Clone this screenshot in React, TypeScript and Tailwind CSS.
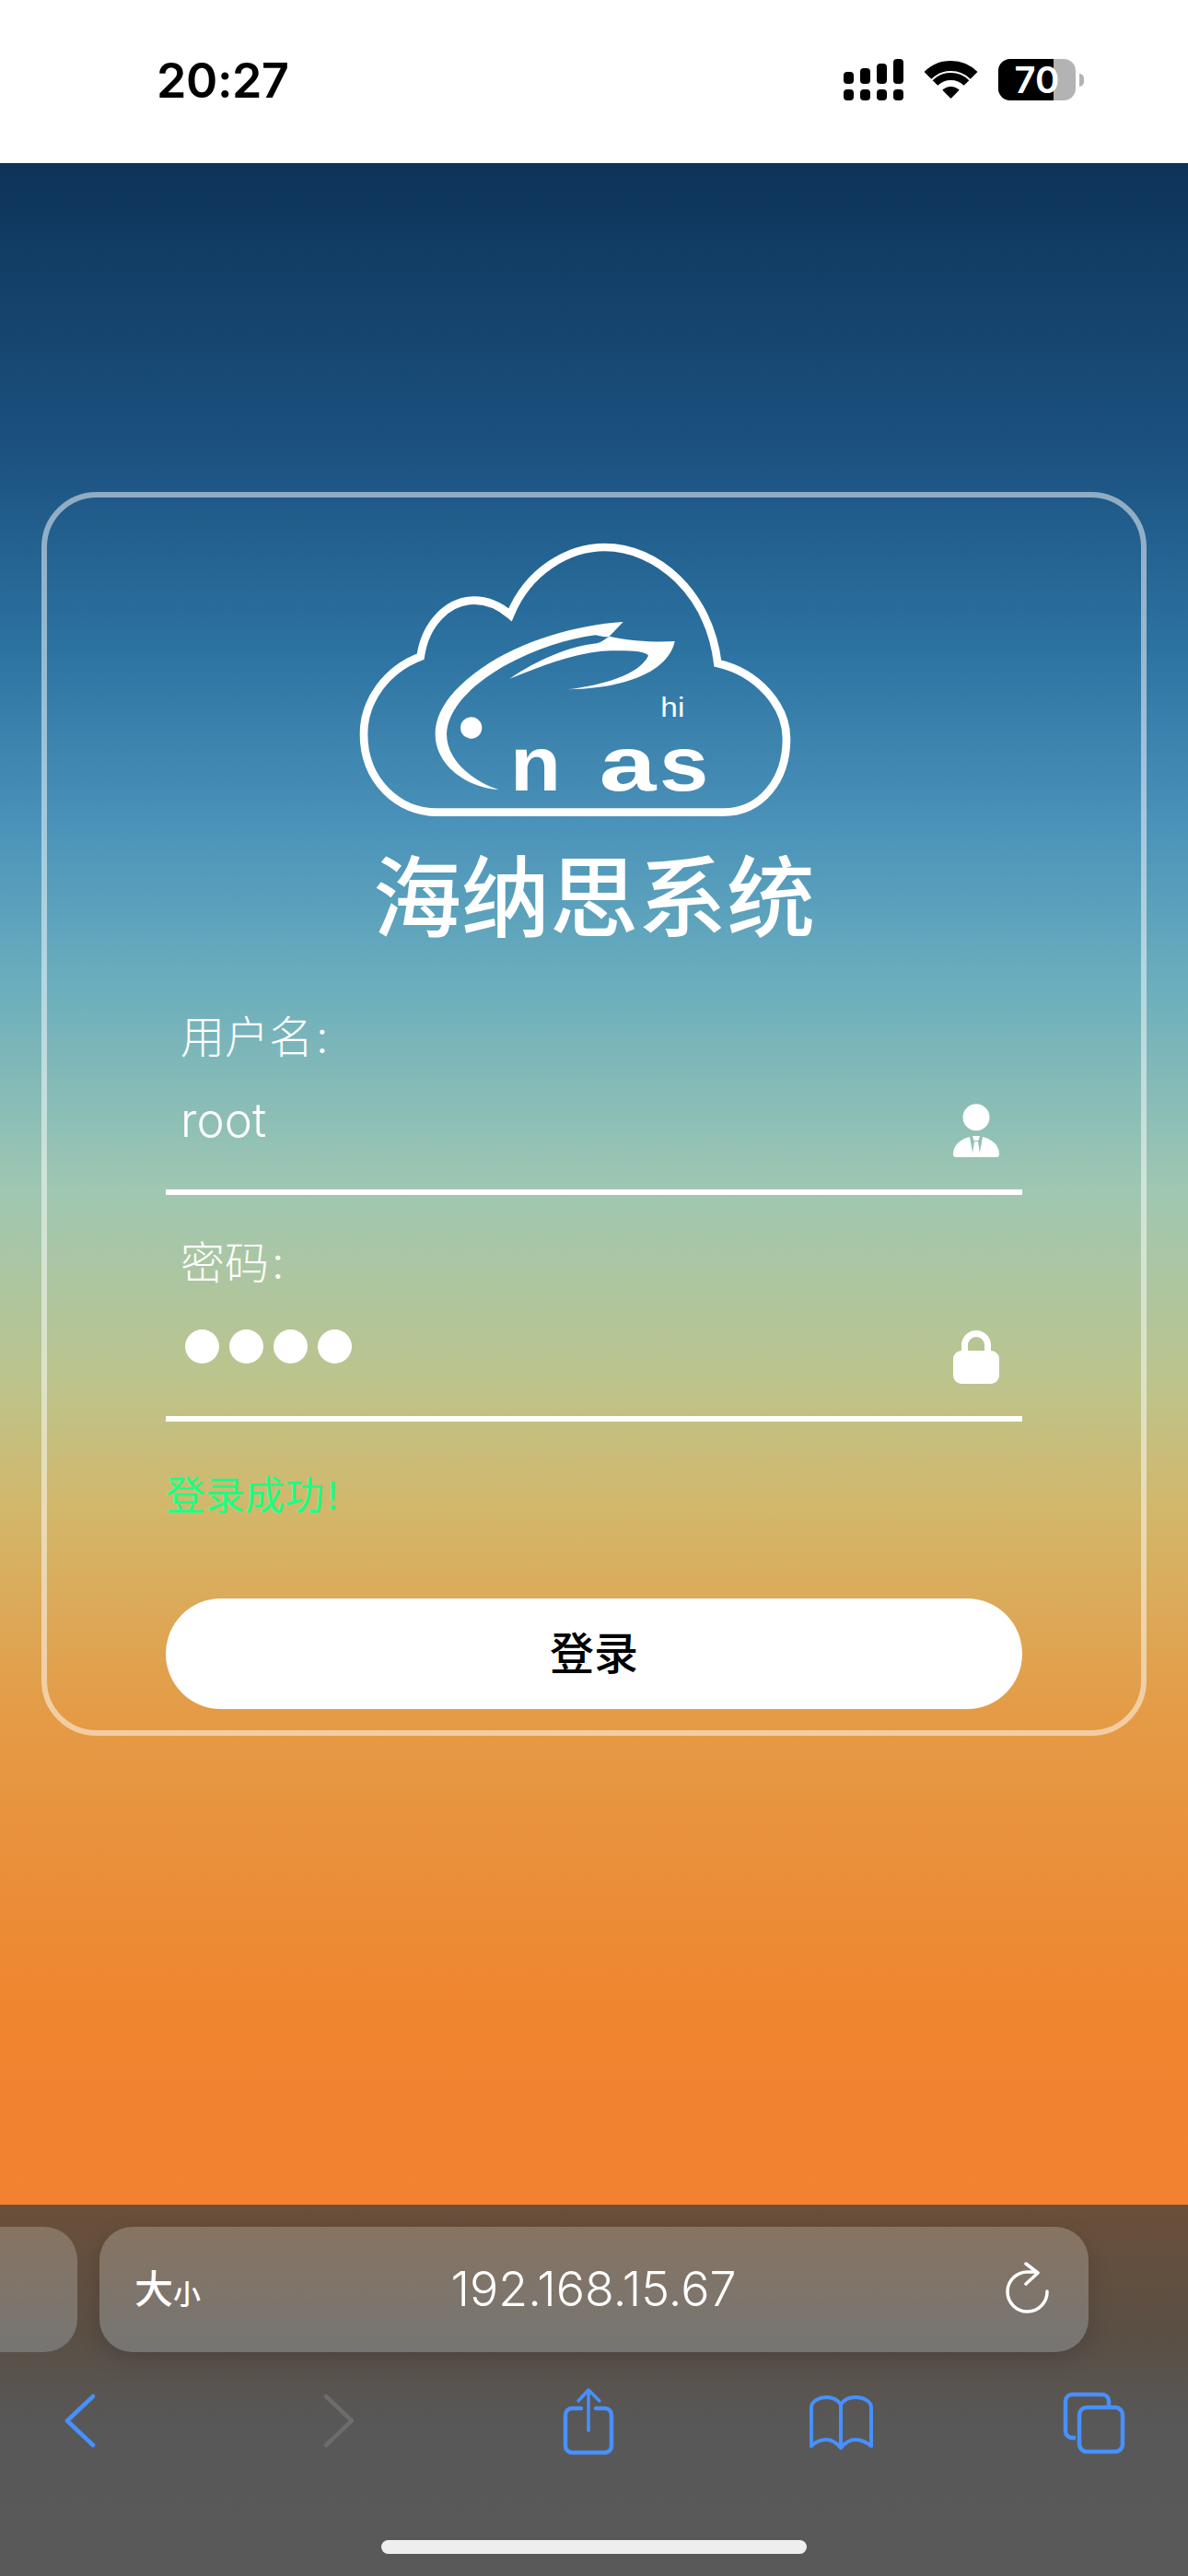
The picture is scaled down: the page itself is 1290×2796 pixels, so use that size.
import React from "react";

function StatusIcons() {
  return (
    <div className="flex items-start">
      <svg width="66" height="46" viewBox="915 64 66 46" className="mr-[22px] block" fill="#000">
        <rect x="916" y="78" width="11" height="13" rx="4" />
        <rect x="934" y="74" width="11" height="17" rx="4" />
        <rect x="952" y="69" width="11" height="22" rx="4" />
        <rect x="970" y="64" width="11" height="27" rx="4" />
        <rect x="916" y="97" width="11" height="12" rx="4" />
        <rect x="934" y="97" width="11" height="12" rx="4" />
        <rect x="952" y="97" width="11" height="12" rx="4" />
        <rect x="970" y="97" width="11" height="12" rx="4" />
      </svg>
      <svg width="60" height="46" viewBox="1003 64 60 46" className="mr-[21px] block">
        <path d="M1007.4 81.9A35.5 35.5 0 0 1 1057.6 81.9" fill="none" stroke="#000" strokeWidth="11" />
        <path d="M1015.5 90A24 24 0 0 1 1049.5 90" fill="none" stroke="#000" strokeWidth="8" />
        <path d="M1032.5 107L1023.3 97.8A13 13 0 0 1 1041.7 97.8Z" fill="#000" />
      </svg>
      <div className="relative h-[45px] w-[84px] rounded-[13px] bg-[#b3b3b3]">
        <div className="h-full w-[60px] rounded-l-[13px] bg-black" />
        <div className="absolute inset-0 flex items-center justify-center text-[40px] leading-none font-semibold text-white">70</div>
      </div>
      <div className="mt-[16px] ml-[4px] h-[14px] w-[5px] rounded-r-full bg-[#b3b3b3]" />
    </div>
  );
}

function Logo() {
  return (
    <svg width="520" height="330" viewBox="75 0 1560 990" className="mx-auto block">
      <path
        d="M345 935C215 935 105 830 105 680C105 570 180 470 290 428C305 320 380 245 465 245C510 245 550 265 582 292C640 150 770 72 890 72C1060 72 1230 220 1258 450C1390 480 1482 590 1482 695C1482 830 1400 935 1275 935Z"
        fill="none"
        stroke="#fff"
        strokeWidth="26"
        strokeLinejoin="miter"
      />
      <path
        d="M950 315C800 325 620 375 490 465C390 535 335 610 338 685C340 770 420 850 545 862C450 830 375 760 375 680C378 600 450 525 560 460C670 400 770 370 860 358C880 362 890 366 905 362Z"
        fill="#fff"
      />
      <path
        d="M905 362C980 378 1060 382 1118 378C1105 450 1010 530 770 535C880 520 1000 490 1032 425C1020 408 960 408 880 410C780 420 680 460 580 500C670 440 770 395 865 385C880 380 890 372 905 362Z"
        fill="#fff"
      />
      <circle cx="455" cy="660" r="35" fill="#fff" />
      <text x="1072" y="624" fill="#fff" fontSize="88" className="font-['Liberation_Sans']" textLength="78" lengthAdjust="spacingAndGlyphs">hi</text>
      <text x="582" y="865" fill="#fff" fontSize="250" fontWeight="700" className="font-['Liberation_Sans']" textLength="165" lengthAdjust="spacingAndGlyphs">n</text>
      <text x="872" y="865" fill="#fff" fontSize="250" fontWeight="700" className="font-['Liberation_Sans']" textLength="185" lengthAdjust="spacingAndGlyphs">a</text>
      <text x="1068" y="865" fill="#fff" fontSize="250" fontWeight="700" className="font-['Liberation_Sans']" textLength="160" lengthAdjust="spacingAndGlyphs">s</text>
    </svg>
  );
}

function PersonIcon() {
  return (
    <svg width="50" height="58" viewBox="0 0 50 58" fill="#fff" className="block">
      <circle cx="25" cy="14.7" r="14.5" />
      <path d="M0 55C0 46 6 39 18 36L22 58H3Q0 58 0 55Z" />
      <path d="M50 55C50 46 44 39 32 36L28 58H47Q50 58 50 55Z" />
      <path d="M21 35H29L27.5 40H22.5Z" />
      <path d="M23 41H27L29.5 58H20.5Z" />
    </svg>
  );
}

function LockIcon() {
  return (
    <svg width="50" height="58" viewBox="0 0 50 58" className="block">
      <path d="M12.5 26V16A12.5 12.5 0 0 1 37.5 16V26" fill="none" stroke="#fff" strokeWidth="7" />
      <rect x="0" y="22" width="50" height="36" rx="9" fill="#fff" />
    </svg>
  );
}

function NavIcons() {
  const s = "#4790ff";
  return (
    <div className="mt-[37px] flex h-[76px] items-start">
      <svg width="36" height="60" viewBox="69 2598 36 60" className="mt-[8px] ml-[69px] block">
        <path d="M101 2601L73 2627.5L101 2654" fill="none" stroke={s} strokeWidth="4.5" strokeLinecap="round" strokeLinejoin="round" />
      </svg>
      <svg width="36" height="60" viewBox="350 2598 36 60" className="mt-[8px] ml-[245px] block">
        <path d="M354 2601L382 2627.5L354 2654" fill="none" stroke="#6c6c6c" strokeWidth="4.5" strokeLinecap="round" strokeLinejoin="round" />
      </svg>
      <svg width="60" height="76" viewBox="609 2588 60 76" className="ml-[223px] block">
        <path d="M631 2612H621A7 7 0 0 0 614 2619V2653A7 7 0 0 0 621 2660H657A7 7 0 0 0 664 2653V2619A7 7 0 0 0 657 2612H647" fill="none" stroke={s} strokeWidth="4.5" strokeLinecap="round" />
        <path d="M639 2593V2636M628 2604L639 2592L651 2604" fill="none" stroke={s} strokeWidth="3.5" strokeLinecap="round" strokeLinejoin="round" />
      </svg>
      <svg width="74" height="64" viewBox="877 2596 74 64" className="mt-[8px] ml-[208px] block">
        <path
          d="M881 2653V2611C881 2604 890 2600 897 2600C904 2600 910 2603 913 2608C916 2603 922 2600 929 2600C937 2600 946 2604 946 2611V2653C940 2648 935 2646 929 2646C922 2646 917 2650 913 2655C909 2650 904 2646 897 2646C891 2646 886 2648 881 2653ZM913 2608V2655"
          fill="none"
          stroke={s}
          strokeWidth="4"
          strokeLinejoin="round"
          strokeLinecap="round"
        />
      </svg>
      <svg width="72" height="72" viewBox="1152 2592 72 72" className="mt-[4px] ml-[201px] block">
        <path d="M1168 2644H1164A7 7 0 0 1 1157 2637V2604A7 7 0 0 1 1164 2597H1197A7 7 0 0 1 1204 2604V2609" fill="none" stroke={s} strokeWidth="4.5" />
        <rect x="1172" y="2611" width="47" height="48" rx="8" fill="none" stroke={s} strokeWidth="4.5" />
      </svg>
    </div>
  );
}

export default function App() {
  return (
    <div className="flex h-[2796px] w-[1290px] flex-col overflow-hidden bg-white font-['Inter','Noto_Sans_CJK_SC',sans-serif]">
      <header className="flex h-[177px] shrink-0 items-start justify-between pt-[64px] pr-[113px] pl-[170px]">
        <span className="text-[52px] leading-[48px] font-semibold tracking-[-0.4px] text-black">20:27</span>
        <StatusIcons />
      </header>

      <main className="h-[2216px] shrink-0 bg-[linear-gradient(to_bottom,#0d3358_0px,#1c5381_323px,#2c72a1_523px,#4b93ba_723px,#69adbd_883px,#9fc7b2_1113px,#bcc48c_1323px,#d3b76a_1463px,#e59b46_1683px,#ef852f_2000px,#f38131_2216px)] pt-[357px]">
        <div className="mx-auto w-[1200px] rounded-[60px] border-[6px] border-white/50 pt-[30px] pb-[23px]">
          <Logo />
          <h1 className="mt-[14px] text-center text-[96px] leading-[120px] font-medium text-white">海纳思系统</h1>
          <form className="mx-auto mt-[62px] w-[930px]">
            <div className="pl-[16px] text-[48px] leading-[60px] font-light text-white">用户名<span className="ml-[3px]">:</span></div>
            <div className="flex h-[141px] justify-between border-b-[6px] border-white pr-[25px] pl-[16px]">
              <span className="mt-[30px] text-[51px] leading-[60px] font-light text-white">root</span>
              <div className="mt-[42px]"><PersonIcon /></div>
            </div>
            <div className="mt-[44px] pl-[16px] text-[48px] leading-[60px] font-light text-white">密码<span className="ml-[3px]">:</span></div>
            <div className="flex h-[142px] justify-between border-b-[6px] border-white pr-[25px] pl-[21px]">
              <div className="mt-[42px] flex h-[37px] gap-[11px]">
                <span className="h-[37px] w-[37px] rounded-full bg-white" />
                <span className="h-[37px] w-[37px] rounded-full bg-white" />
                <span className="h-[37px] w-[37px] rounded-full bg-white" />
                <span className="h-[37px] w-[37px] rounded-full bg-white" />
              </div>
              <div className="mt-[43px]"><LockIcon /></div>
            </div>
            <p className="mt-[50px] text-[43px] leading-[60px] font-normal text-[#1aff85]">登录成功<span className="ml-[3px]">!</span></p>
            <button type="button" className="mt-[82px] block h-[120px] w-full rounded-full bg-white text-[48px] font-medium text-black">登录</button>
          </form>
        </div>
      </main>

      <footer className="h-[403px] shrink-0 bg-[linear-gradient(to_bottom,#6b4f39_0%,#5a4f45_35%,#585858_60%,#595959_100%)] pt-[24px]">
        <div className="flex h-[136px] gap-[24px]">
          <div className="h-full w-[84px] rounded-r-[36px] bg-[linear-gradient(to_bottom,#877462,#767573)]" />
          <div className="grid h-full w-[1074px] grid-cols-[1fr_auto_1fr] items-center rounded-[36px] bg-[linear-gradient(to_bottom,#877462,#767573)] pr-[41px] pl-[38px] shadow-[0_8px_24px_rgba(0,0,0,0.15)]">
            <div className="flex items-end text-white">
              <span className="text-[42px] leading-[46px] font-medium">大</span>
              <span className="text-[30px] leading-[36px] font-medium">小</span>
            </div>
            <span className="ml-[2px] text-[52px] leading-[60px] font-light text-white">192.168.15.67</span>
            <svg width="50" height="60" viewBox="1091 2454 50 60" className="block justify-self-end">
              <path d="M1137 2486A21.5 21.5 0 1 1 1116 2465H1124" fill="none" stroke="#fff" strokeWidth="3.5" strokeLinecap="round" />
              <path d="M1114 2456L1127 2466L1114 2478" fill="none" stroke="#fff" strokeWidth="3.5" strokeLinecap="round" strokeLinejoin="round" />
            </svg>
          </div>
        </div>
        <NavIcons />
        <div className="mt-[91px] ml-[414px] h-[15px] w-[462px] rounded-full bg-[#eeeeee]" />
      </footer>
    </div>
  );
}
